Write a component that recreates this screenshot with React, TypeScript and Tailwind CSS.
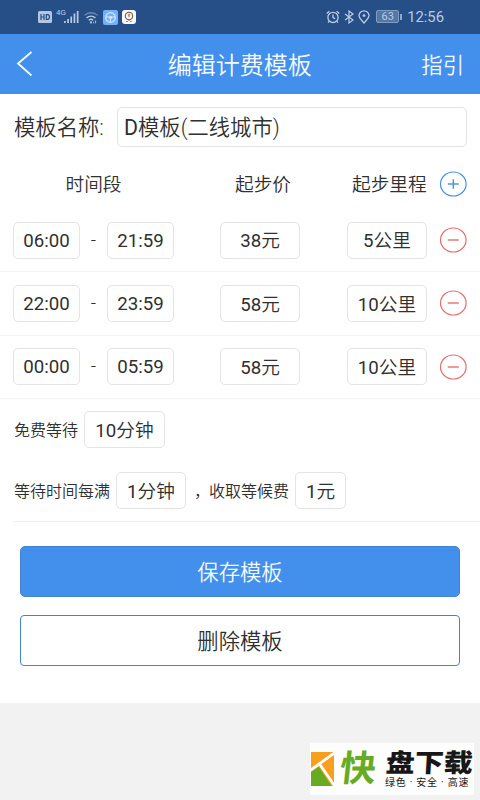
import React, { useState } from 'react';

interface Period {
  start: string;
  end: string;
  price: string;
  distance: string;
}

const INITIAL_PERIODS: Period[] = [
  { start: '06:00', end: '21:59', price: '38元', distance: '5公里' },
  { start: '22:00', end: '23:59', price: '58元', distance: '10公里' },
  { start: '00:00', end: '05:59', price: '58元', distance: '10公里' },
];

// Digits are set in the regular weight, the unit after them in a lighter one
function Field({ className = '', value }: { className?: string; value: string }) {
  const digits = value.match(/^[\d:]+/)?.[0] ?? '';
  const unit = value.slice(digits.length);

  return (
    <div className={`flex h-[37px] shrink-0 items-center justify-center rounded-[5px] border border-[#e4e4e4] bg-white text-[18.67px] leading-none whitespace-nowrap ${className}`}>
      <div>
        <span className="font-normal">{digits}</span>
        {unit}
      </div>
    </div>
  );
}

function RoundButton({ kind, onClick }: { kind: 'add' | 'remove'; onClick?: () => void }) {
  const color = kind === 'add' ? 'text-[#4a8fe0]' : 'text-[#e0706e]';
  return (
    <button onClick={onClick} className={`h-[26px] w-7 shrink-0 ${color}`}>
      <svg width="28" height="26" viewBox="0 0 28 26" fill="none" stroke="currentColor">
        <ellipse cx="14.3" cy="13" rx="12.8" ry="12" strokeWidth="1.2" />
        <path d="M8.8 13h11" strokeWidth="1.4" />
        {kind === 'add' && <path d="M14.3 8.3v9.4" strokeWidth="1.4" />}
      </svg>
    </button>
  );
}

function StatusBar() {
  return (
    <div className="flex h-[34px] items-center bg-[#254f86] pl-[38px] font-normal text-[#b8cbe4]">
      <svg width="14" height="12" viewBox="0 0 14 12">
        <rect y="0" width="14" height="12" rx="1.5" fill="#b3c6df" />
        <path d="M3 3v6M6 3v6M3 6h3M8.3 3.6v4.8h1.2c2.6 0 2.6-4.8 0-4.8z" fill="none" stroke="#254f86" strokeWidth="1.2" />
      </svg>
      <div className="ml-1 flex h-[16px] items-start">
        <span className="font-['Roboto',sans-serif] text-[8px] leading-none">4G</span>
      </div>
      <svg className="-ml-[2px]" width="15" height="14" viewBox="0 0 15 14" fill="currentColor">
        <path d="M0 11h1.7v2H0zM3.2 9h1.7v4H3.2zM6.4 6.4h1.7V13H6.4zM9.6 3.6h1.7V13H9.6zM12.8 1h1.7v12h-1.7z" />
      </svg>
      <svg className="ml-[5px]" width="14" height="13" viewBox="0 0 14 13" fill="none" stroke="currentColor" strokeWidth="1.3">
        <path d="M.5 4.4a9.3 9.3 0 0 1 13 0" opacity=".5" />
        <path d="M2.5 7a6.4 6.4 0 0 1 9 0M4.7 9.4a3.3 3.3 0 0 1 4.600 0" />
        <circle cx="7" cy="11.4" r="1.1" fill="currentColor" stroke="none" />
        <path d="M11.6 9.5v2.8M9.7 10.800v1.500" strokeWidth=".9" />
      </svg>
      <svg className="ml-[5px]" width="15" height="15" viewBox="0 0 15 15" fill="none">
        <rect width="15" height="15" rx="2" fill="#73b2fb" />
        <circle cx="7.5" cy="7.5" r="4.8" stroke="#d3e8ff" strokeWidth="1.2" />
        <path d="M3 7h9M7.5 8.5v3.5" stroke="#d3e8ff" strokeWidth="1.1" />
        <circle cx="7.5" cy="7.6" r="1.5" fill="#d3e8ff" />
      </svg>
      <svg className="ml-[4px]" width="14" height="14" viewBox="0 0 14 14" fill="none">
        <rect width="14" height="14" rx="3" fill="#f8f8f8" />
        <circle cx="7" cy="6" r="3.8" stroke="#55504e" strokeWidth="1" />
        <path d="M7 3.8v3.4M5.7 5h2.6" stroke="#c97843" strokeWidth="1.2" />
        <path d="M4.2 11.5h1.8M8 11.5h1.8M7 9.7v1.5" stroke="#8a7368" strokeWidth=".9" />
      </svg>

      <div className="ml-auto flex items-center pr-9">
        <svg width="14" height="14" viewBox="0 0 14 14" fill="none" stroke="currentColor" strokeWidth="1.3">
          <circle cx="7" cy="7.4" r="5.1" />
          <path d="M7 4.6v3l2.2 1.2M.7 3.6 3.4 1.2M13.3 3.6l-2.7-2.4M3.3 11.2l-1.2 1.5M10.7 11.2l1.2 1.5" />
        </svg>
        <svg className="ml-[4px]" width="10" height="14" viewBox="0 0 10 14" fill="none" stroke="currentColor" strokeWidth="1.2">
          <path d="M1 4l8 6-4 3V1l4 3-8 6" />
        </svg>
        <svg className="ml-[4px]" width="12" height="14" viewBox="0 0 12 14" fill="none" stroke="currentColor" strokeWidth="1.3">
          <path d="M6 13C3.4 10.2 1 8 1 5.6a5 4.8 0 0 1 10 0C11 8 8.6 10.2 6 13z" />
          <circle cx="6" cy="5.6" r="1.4" fill="currentColor" stroke="none" />
        </svg>
        <div className="ml-1.5 flex h-[13px] w-[23px] items-center justify-center rounded-[2px] border border-[#7e9cc4] bg-[#5577a5] font-['Roboto',sans-serif] text-[11px] leading-none">
          63
        </div>
        <div className="ml-px h-[6px] w-[2px] bg-[#8fa9cd]" />
        <span className="ml-[5px] pt-px font-['Roboto',sans-serif] text-[14.8px] leading-none">12:56</span>
      </div>
    </div>
  );
}

function Watermark() {
  return (
    <div className="mr-[6px] mb-[5px] flex h-[52px] w-[164px] items-center bg-[#fdfdfd] text-[#171717]">
      <svg className="ml-px shrink-0" width="23" height="34" viewBox="0 0 23 34">
        <path d="M0 0h23v34H0z" fill="#f8a01c" />
        <path d="M0 20l8-5 12.5 19H0z" fill="#67ab22" />
        <path d="M-1 18.500 24 .5M8.500 12l16 23" stroke="#fdfdfd" strokeWidth="2.8" fill="none" />
      </svg>
      <span className="ml-[6px] w-[37px] -skew-x-6 text-[36px] leading-none font-bold text-[#67ab22]">快</span>
      <div className="ml-[8px] flex flex-col pb-1">
        <span className="origin-bottom-left -skew-x-3 scale-y-[0.88] pt-[3px] text-[29px] leading-[27px] font-black whitespace-nowrap">盘下载</span>
        <span className="pt-px text-[10px] leading-[11px] font-normal tracking-[0.75px] whitespace-nowrap">绿色 · 安全 · 高速</span>
      </div>
    </div>
  );
}

function App() {
  const [periods, setPeriods] = useState<Period[]>(INITIAL_PERIODS);

  const addPeriod = () => {
    setPeriods([...periods, { start: '00:00', end: '00:00', price: '0元', distance: '0公里' }]);
  };

  const removePeriod = (index: number) => {
    setPeriods(periods.filter((_, i) => i !== index));
  };

  return (
    <div className="flex h-[800px] w-[480px] flex-col overflow-hidden bg-[#f2f2f2] font-['Roboto','Noto_Sans_CJK_SC',sans-serif] font-[350] text-[#303030]">
      <StatusBar />

      {/* Header */}
      <header className="flex h-[60px] items-center justify-between bg-[#438fec] pr-4 pl-4 text-[#f4faff]">
        <button className="w-[42px]">
          <svg width="18" height="26" viewBox="0 0 18 26" fill="none" stroke="currentColor" strokeWidth="1.8">
            <path d="M15.5 1 2 12.5l13.5 12" />
          </svg>
        </button>
        <h1 className="pt-1 text-[24px] leading-none font-[350]">编辑计费模板</h1>
        <button className="pt-1 text-[21.33px] leading-none">指引</button>
      </header>

      <main className="h-[609px] bg-white">
        {/* Template name */}
        <div className="flex h-[65px] items-center pr-[13px] pl-[14px]">
          <label className="w-[103px] pt-[3px] text-[21.33px] leading-none">模板名称:</label>
          <div className="flex h-10 flex-1 items-center rounded-[5px] border border-[#e4e4e4] pt-[3px] pl-[6px] text-[21.33px] leading-none">
            <div>
              <span className="font-normal">D</span>模板(二线城市)
            </div>
          </div>
        </div>

        {/* Column titles */}
        <div className="flex h-[50px] items-center pl-[13px] text-[18.67px] leading-none">
          <span className="w-[161px] pt-[3px] text-center">时间段</span>
          <span className="ml-[49px] w-20 pt-[3px] text-center">起步价</span>
          <span className="ml-[43px] w-[87px] pt-[3px] pl-[6px]">起步里程</span>
          <span className="ml-[6px] flex">
            <RoundButton kind="add" onClick={addPeriod} />
          </span>
        </div>

        {/* Charging periods */}
        {periods.map((period, index) => (
          <div key={index} className="flex h-[63.33px] items-center border-b border-[#f2f2f2] pl-[13px]">
            <Field className="w-[67px] pt-[2px]" value={period.start} />
            <span className="w-[27px] text-center text-[18.67px] leading-none">-</span>
            <Field className="w-[67px] pt-[2px]" value={period.end} />
            <Field className="ml-[46px] w-20 pt-[3px]" value={period.price} />
            <Field className="ml-[47px] w-20 pt-[3px]" value={period.distance} />
            <span className="ml-3 flex">
              <RoundButton kind="remove" onClick={() => removePeriod(index)} />
            </span>
          </div>
        ))}

        {/* Waiting rules */}
        <div className="flex h-[61px] items-center pl-[14px] text-base leading-none">
          <span className="pt-[3px]">免费等待</span>
          <Field className="ml-[6px] w-[81px] pt-[3px]" value="10分钟" />
        </div>
        <div className="ml-[14px] flex h-[62px] items-center border-b border-[#eeeeee] text-base leading-none">
          <span className="pt-[3px]">等待时间每满</span>
          <Field className="ml-[6px] w-[70px] pt-[3px]" value="1分钟" />
          <span className="ml-[8px] w-[15px] pt-[3px]">，</span>
          <span className="pt-[3px]">收取等候费</span>
          <Field className="ml-[6px] w-[51px] pt-[3px]" value="1元" />
        </div>

        {/* Actions */}
        <div className="flex flex-col gap-[18px] px-5 pt-6 text-[21.33px] leading-none">
          <button className="h-[51px] rounded-[5px] border border-[#4384cf] bg-[#438fec] pt-[3px] text-[#f4faff]">保存模板</button>
          <button className="h-[51px] rounded-[4px] border border-[#4384cf] bg-white pt-[3px]">删除模板</button>
        </div>
      </main>

      <div className="flex flex-1 items-end justify-end">
        <Watermark />
      </div>
    </div>
  );
}

export default App;
